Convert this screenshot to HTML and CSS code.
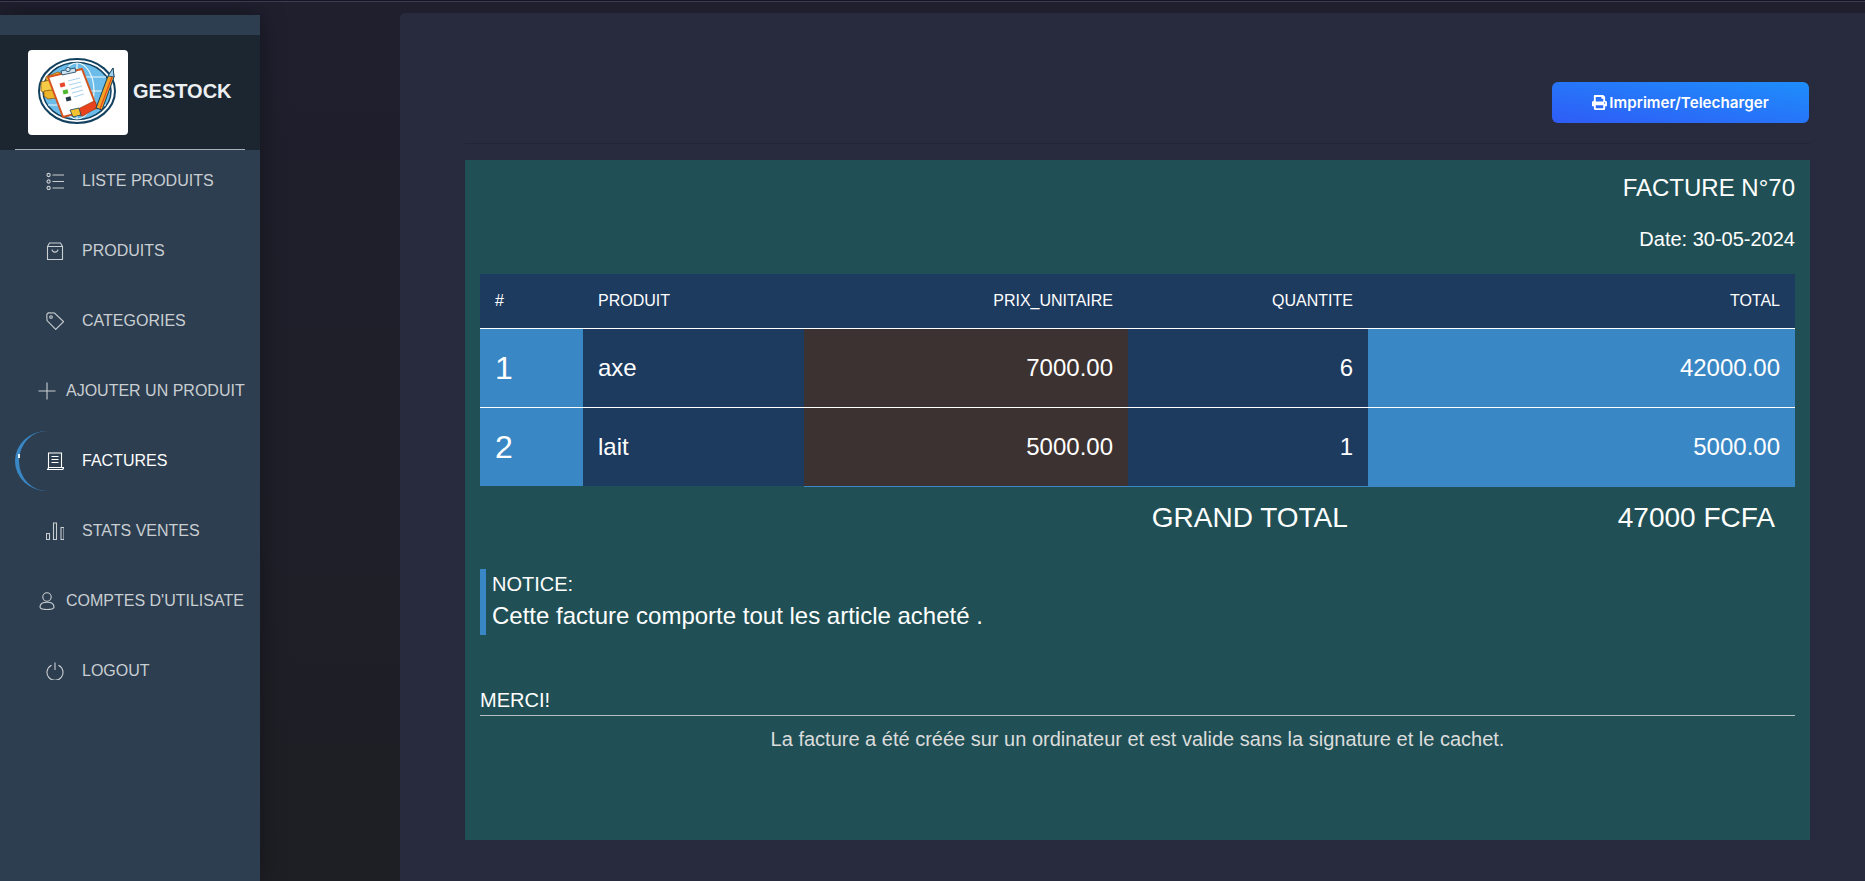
FILE: index.html
```html
<!DOCTYPE html>
<html>
  <head>
    <title>Gestock - Facture</title>
    <link rel="stylesheet" href="styles.css">
  </head>
  <body>
    <div class="top-line"></div>
    <div class="layout">
      <aside class="sidebar">
        <div class="brand">
          <div class="logo">
            <svg viewBox="0 0 100 85" width="100" height="85">
              <ellipse cx="49" cy="41" rx="38" ry="32" fill="#fff" stroke="#12405f" stroke-width="2"/>
              <ellipse cx="49" cy="41" rx="34" ry="28.5" fill="#6bbce8" stroke="#12405f" stroke-width="1.5"/>
              <g fill="none" stroke="#eef8fd" stroke-width="1.2">
                <ellipse cx="49" cy="41" rx="17" ry="28"/>
                <path d="M49 13v56M16 41h66M20 27h58M20 55h58"/>
              </g>
              <path d="M18 27l12-5 7 3v9l-12 5-7-3z" fill="#f5c139" stroke="#8a5a12" stroke-width=".8"/>
              <path d="M13 32l9-2 6 3v8l-9 3-6-3z" fill="#f6cb45" stroke="#8a5a12" stroke-width=".8"/>
              <path d="M16 41l8-1 4 3v5l-8 1-4-3z" fill="#eeb52b" stroke="#8a5a12" stroke-width=".8"/>
              <path d="M20 27l34-8 15 39-34 9z" fill="#fff" stroke="#d4541d" stroke-width="2" stroke-linejoin="round"/>
              <path d="M33 21l14-3 1 4-14 3z" fill="#cfe3ee" stroke="#12405f" stroke-width=".8"/>
              <circle cx="40" cy="19.500" r="2.200" fill="#cfe3ee" stroke="#12405f" stroke-width=".8"/>
              <rect x="32" y="33" width="5" height="4" fill="#e8452c" transform="rotate(-14 34 35)"/>
              <rect x="35" y="40" width="5" height="4" fill="#4cb82f" transform="rotate(-14 37 42)"/>
              <rect x="38" y="47" width="5" height="4" fill="#24384a" transform="rotate(-14 40 49)"/>
              <g fill="none" stroke="#a9d2ec" stroke-width="1">
                <path d="M40 31l12-3M41 35l12-3M43 39l11-3M44 43l11-3M46 47l10-3"/>
              </g>
              <path d="M50 59l16-8 4 6-15 9-6-1z" fill="#e8431c" stroke="#8a3413" stroke-width=".6"/>
              <path d="M42 60l9-2 2 7-8 2z" fill="#f3c233" stroke="#12405f" stroke-width=".8"/>
              <path d="M68 58l12-32 5-8 1 9-12 33z" fill="#f1a325" stroke="#12405f" stroke-width="1"/>
              <path d="M80 26l5-8 1 9z" fill="#9fd2ea" stroke="#12405f" stroke-width=".8"/>
              <path d="M72 59l12-32" stroke="#e8431c" stroke-width="1.200"/>
            </svg>
          </div>
          <span class="brand-name">GESTOCK</span>
        </div>
        <hr class="brand-line">
        <nav class="nav">
          <a class="nav-item">
            <svg class="nav-icon" viewBox="0 0 18 18">
              <circle cx="2.600" cy="3" r="1.600"/><circle cx="2.600" cy="9.500" r="1.600"/><circle cx="2.600" cy="16" r="1.600"/>
              <path d="M6.500 3H18M6.500 9.500H18M6.500 16H18"/>
            </svg>
            LISTE PRODUITS
          </a>
          <a class="nav-item">
            <svg class="nav-icon" viewBox="0 0 18 18">
              <path d="M1.500 4.500L3.500 1h11l2 3.500V17.500H1.500zM1.500 4.500h15"/>
              <path d="M6 7.500c.4 3.500 5.600 3.500 6 0"/>
            </svg>
            PRODUITS
          </a>
          <a class="nav-item">
            <svg class="nav-icon" viewBox="0 0 18 18">
              <path d="M.8 2.400L2.200.8 8.500 1l9 8.600-7.800 7.800-8.700-8.800z"/>
              <circle cx="5" cy="5" r="1.300"/>
            </svg>
            CATEGORIES
          </a>
          <a class="nav-item nav-item-wide">
            <svg class="nav-icon" viewBox="0 0 18 18">
              <path d="M9 .5v17M.5 9h17"/>
            </svg>
            AJOUTER UN PRODUIT
          </a>
          <a class="nav-item nav-item-active">
            <svg class="nav-icon" viewBox="0 0 18 18">
              <path d="M2.500 15.500V1h13v15"/>
              <path d="M5.500 4.500h7M5.500 7.500h7M5.500 10.500h7"/>
              <path d="M1 17.500c1-.2 1.500-1 1.500-2h15c0 1-.6 2-1.500 2z"/>
            </svg>
            FACTURES
          </a>
          <a class="nav-item">
            <svg class="nav-icon" viewBox="0 0 18 18">
              <path d="M.5 11.500h3v6h-3zM7.500 1h3v16.500h-3zM15 5.500h3v12h-3z"/>
            </svg>
            STATS VENTES
          </a>
          <a class="nav-item nav-item-wide">
            <svg class="nav-icon" viewBox="0 0 18 18">
              <circle cx="9" cy="5" r="4.200"/>
              <path d="M2 15c0-3 3-4.800 7-4.800s7 1.800 7 4.800c0 1.800-3 2.500-7 2.500s-7-.7-7-2.500z"/>
            </svg>
            COMPTES D'UTILISATE
          </a>
          <a class="nav-item">
            <svg class="nav-icon" viewBox="0 0 18 18">
              <path d="M9 .5v7.500"/>
              <path d="M5.500 3.200a8 8 0 1 0 7 0"/>
            </svg>
            LOGOUT
          </a>
        </nav>
      </aside>

      <main class="panel">
        <div class="panel-head">
          <button class="print-btn">
            <svg class="print-icon" viewBox="0 0 512 512">
              <path d="M448 192V77.250c0-8.490-3.370-16.620-9.370-22.630L393.370 9.370c-6-6-14.140-9.370-22.630-9.370H96C78.330 0 64 14.330 64 32v160c-35.350 0-64 28.650-64 64v112c0 8.840 7.160 16 16 16h48v96c0 17.670 14.330 32 32 32h320c17.670 0 32-14.330 32-32v-96h48c8.840 0 16-7.160 16-16V256c0-35.350-28.650-64-64-64zm-64 256H128v-96h256v96zm0-224H128V64h192v48c0 8.840 7.160 16 16 16h48v96zm48 72c-13.250 0-24-10.750-24-24 0-13.260 10.750-24 24-24s24 10.740 24 24c0 13.250-10.750 24-24 24z"/>
            </svg>
            Imprimer/Telecharger
          </button>
        </div>

        <section class="invoice">
          <div class="invoice-title">FACTURE N°70</div>
          <div class="invoice-date">Date: 30-05-2024</div>

          <table class="invoice-table">
            <colgroup>
              <col class="col-no">
              <col class="col-name">
              <col class="col-price">
              <col class="col-qty">
              <col class="col-total">
            </colgroup>
            <thead>
              <tr>
                <th>#</th>
                <th>PRODUIT</th>
                <th class="right">PRIX_UNITAIRE</th>
                <th class="right">QUANTITE</th>
                <th class="right">TOTAL</th>
              </tr>
            </thead>
            <tbody>
              <tr>
                <td class="no">1</td>
                <td class="name">axe</td>
                <td class="price right">7000.00</td>
                <td class="qty right">6</td>
                <td class="total right">42000.00</td>
              </tr>
              <tr>
                <td class="no">2</td>
                <td class="name">lait</td>
                <td class="price right">5000.00</td>
                <td class="qty right">1</td>
                <td class="total right">5000.00</td>
              </tr>
            </tbody>
          </table>

          <div class="grand-total">
            <span>GRAND TOTAL</span>
            <span>47000 FCFA</span>
          </div>

          <div class="notice">
            <div class="notice-label">NOTICE:</div>
            <div class="notice-text">Cette facture comporte tout les article acheté .</div>
          </div>

          <div class="thanks">MERCI!</div>
          <div class="legal">La facture a été créée sur un ordinateur et est valide sans la signature et le cachet.</div>
        </section>
      </main>
    </div>
  </body>
</html>
```

FILE: styles.css
```css
* {
  box-sizing: border-box;
}

html,
body {
  height: 100%;
}

body {
  margin: 0;
  overflow: hidden;
  background: linear-gradient(#1f1f2e, #1e1f24);
  font-family: "Liberation Sans", Arial, sans-serif;
  color: #fff;
}

.top-line {
  height: 2px;
  border-bottom: 1px solid #3b3e56;
  background-color: #15151f;
}

.layout {
  display: flex;
  height: 879px;
}

/* sidebar */
.sidebar {
  width: 260px;
  margin-top: 13px;
  padding-top: 20px;
  flex-shrink: 0;
  background-color: #2d3e50;
  box-shadow: 0 0 24px rgba(0, 0, 0, 0.35);
}

.brand {
  display: flex;
  align-items: center;
  gap: 5px;
  height: 115px;
  padding-left: 28px;
  background-color: #1b2631;
}

.logo {
  width: 100px;
  height: 85px;
  border-radius: 4px;
  background-color: #fff;
}

.logo svg {
  display: block;
}

.brand-name {
  padding-bottom: 2px;
  font-size: 20px;
  font-weight: bold;
  color: #eceff1;
}

.brand-line {
  height: 1px;
  margin: -1px 15px 0;
  border: 0;
  background-color: #a9b0b5;
}

.nav {
  padding-top: 11px;
}

.nav-item {
  position: relative;
  display: flex;
  align-items: center;
  gap: 18px;
  height: 40px;
  margin-bottom: 30px;
  padding-left: 46px;
  font-size: 16px;
  color: #c9ced2;
  white-space: nowrap;
}

.nav-item-wide {
  gap: 10px;
  padding-left: 38px;
}

.nav-item-active {
  color: #fff;
}

.nav-item-active::before {
  content: "";
  position: absolute;
  left: 15px;
  top: -10px;
  width: 60px;
  height: 60px;
  border-left: 4px solid #3a87c5;
  border-radius: 50%;
}

.nav-item-active::after {
  content: "";
  position: absolute;
  left: 18px;
  top: 13px;
  width: 2px;
  height: 4px;
  background-color: #e8eef2;
}

.nav-icon {
  width: 18px;
  height: 18px;
  flex-shrink: 0;
  fill: none;
  stroke: currentColor;
  stroke-width: 1.1;
}

/* main panel */
.panel {
  flex: 1;
  margin-top: 11px;
  margin-left: 140px;
  padding: 0 55px 0 65px;
  border-radius: 5px 0 0 0;
  background-color: #282b3d;
}

.panel-head {
  display: flex;
  justify-content: flex-end;
  height: 131px;
  padding-top: 69px;
  border-bottom: 1px solid #232534;
}

.print-btn {
  display: flex;
  align-items: center;
  justify-content: center;
  gap: 2px;
  width: 257px;
  height: 41px;
  margin-right: 1px;
  border: 0;
  border-radius: 6px;
  background: linear-gradient(to top right, #2f5cf6, #1e8efb);
  font-family: Inter, "Open Sans", sans-serif;
  font-size: 15.200px;
  font-weight: 600;
  color: #fff;
}

.print-icon {
  width: 15px;
  height: 15px;
  fill: #fff;
}

.invoice {
  height: 680px;
  margin-top: 16px;
  padding: 10px 15px 0;
  background-color: #205055;
}

.invoice-title {
  height: 36px;
  font-size: 24px;
  line-height: 36px;
  text-align: right;
}

.invoice-date {
  height: 68px;
  padding-top: 15px;
  font-size: 20px;
  line-height: 36px;
  text-align: right;
}

/* table */
.invoice-table {
  width: 1315px;
  table-layout: fixed;
  border-collapse: separate;
  border-spacing: 0;
}

.col-no {
  width: 103px;
}

.col-name {
  width: 221px;
}

.col-price {
  width: 324px;
}

.col-qty {
  width: 240px;
}

.invoice-table th {
  height: 55px;
  padding: 0 15px;
  border-bottom: 1px solid #fff;
  background-color: #1d3a5f;
  font-size: 16px;
  font-weight: normal;
  text-align: left;
}

.invoice-table td {
  height: 79px;
  padding: 0 15px;
  border-bottom: 1px solid #fff;
  font-size: 24px;
}

.invoice-table th.right,
.invoice-table td.right {
  text-align: right;
}

.invoice-table td.no {
  background-color: #3a87c5;
  font-size: 32px;
}

.invoice-table td.name,
.invoice-table td.qty {
  background-color: #1d3a5f;
}

.invoice-table td.price {
  background-color: #3c3232;
}

.invoice-table td.total {
  background-color: #3a87c5;
}

.invoice-table tr:last-child td {
  border-bottom-color: #3a87c5;
}

.invoice-table tr:last-child td.no,
.invoice-table tr:last-child td.name {
  border-bottom-color: transparent;
  background-clip: padding-box;
}

.grand-total {
  display: flex;
  align-items: center;
  justify-content: flex-end;
  gap: 270px;
  height: 62px;
  padding-right: 20px;
  font-size: 28px;
}

.notice {
  height: 66px;
  margin-top: 20px;
  padding: 4px 0 0 6px;
  border-left: 6px solid #3a87c5;
}

.notice-label {
  font-size: 20px;
  line-height: 23px;
}

.notice-text {
  margin-top: 5px;
  font-size: 24px;
  line-height: 30px;
}

.thanks {
  height: 47px;
  margin-top: 34px;
  padding-top: 19px;
  border-bottom: 1px solid #b4bec0;
  font-size: 20px;
  line-height: 24px;
}

.legal {
  padding-top: 10px;
  font-size: 20px;
  line-height: 26px;
  text-align: center;
  color: #dcdcdc;
}
```
